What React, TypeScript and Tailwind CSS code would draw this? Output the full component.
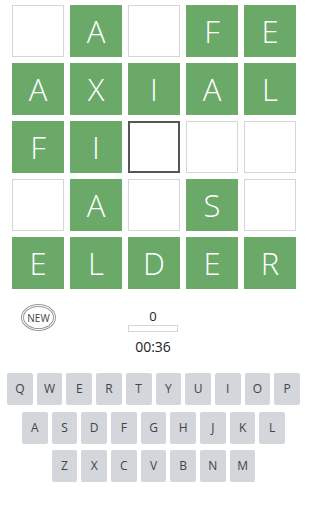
const board: string[][] = [
  ['', 'A', '', 'F', 'E'],
  ['A', 'X', 'I', 'A', 'L'],
  ['F', 'I', '*', '', ''],
  ['', 'A', '', 'S', ''],
  ['E', 'L', 'D', 'E', 'R'],
]

const keyRows = [
  ['Q', 'W', 'E', 'R', 'T', 'Y', 'U', 'I', 'O', 'P'],
  ['A', 'S', 'D', 'F', 'G', 'H', 'J', 'K', 'L'],
  ['Z', 'X', 'C', 'V', 'B', 'N', 'M'],
]

function Tile({ value }: { value: string }) {
  if (value === '*') {
    return <div className="w-[52px] h-[52px] border-2 border-[#555555] bg-white" />
  }
  if (!value) {
    return <div className="w-[52px] h-[52px] border border-[#d6d6d6] bg-white" />
  }
  return (
    <div className="w-[52px] h-[52px] bg-[#6aa968] flex items-center justify-center text-white text-[31px] font-light leading-none">
      {value}
    </div>
  )
}

export default function App() {
  return (
    <div className="w-[306px] h-[512px] bg-white font-['Open_Sans',sans-serif] overflow-hidden">
      {/* Board */}
      <div className="w-[284px] ml-[12px] pt-[5px] grid grid-cols-5 gap-[6px]">
        {board.flat().map((v, i) => (
          <Tile key={i} value={v} />
        ))}
      </div>

      {/* Controls */}
      <div className="grid grid-cols-[1fr_auto_1fr] mt-[19px]">
        <div className="pl-[21px] -mt-[4px]">
          <button className="w-[35px] h-[27px] rounded-[50%] border-[3px] border-double border-[#999] flex items-center justify-center text-[10px] text-[#444] leading-none">
            NEW
          </button>
        </div>
        <div className="flex flex-col items-center">
          <div className="text-[13px] leading-[16px] text-[#222]">0</div>
          <div className="w-[50px] h-[7px] mt-[1px] border border-[#d6d6d6] bg-white" />
          <div className="text-[14px] leading-[18px] mt-[6px] text-[#222]">00:36</div>
        </div>
        <div />
      </div>

      {/* Keyboard */}
      <div className="mt-[17px] flex flex-col items-center gap-[6.7px] pl-[1px]">
        {keyRows.map((row, r) => (
          <div key={r} className="flex gap-[4px]">
            {row.map((k) => (
              <div
                key={k}
                className="w-[25.7px] h-[32px] rounded-[2px] bg-[#d3d6da] flex items-center justify-center text-[12px] text-[#444]"
              >
                {k}
              </div>
            ))}
          </div>
        ))}
      </div>
    </div>
  )
}
